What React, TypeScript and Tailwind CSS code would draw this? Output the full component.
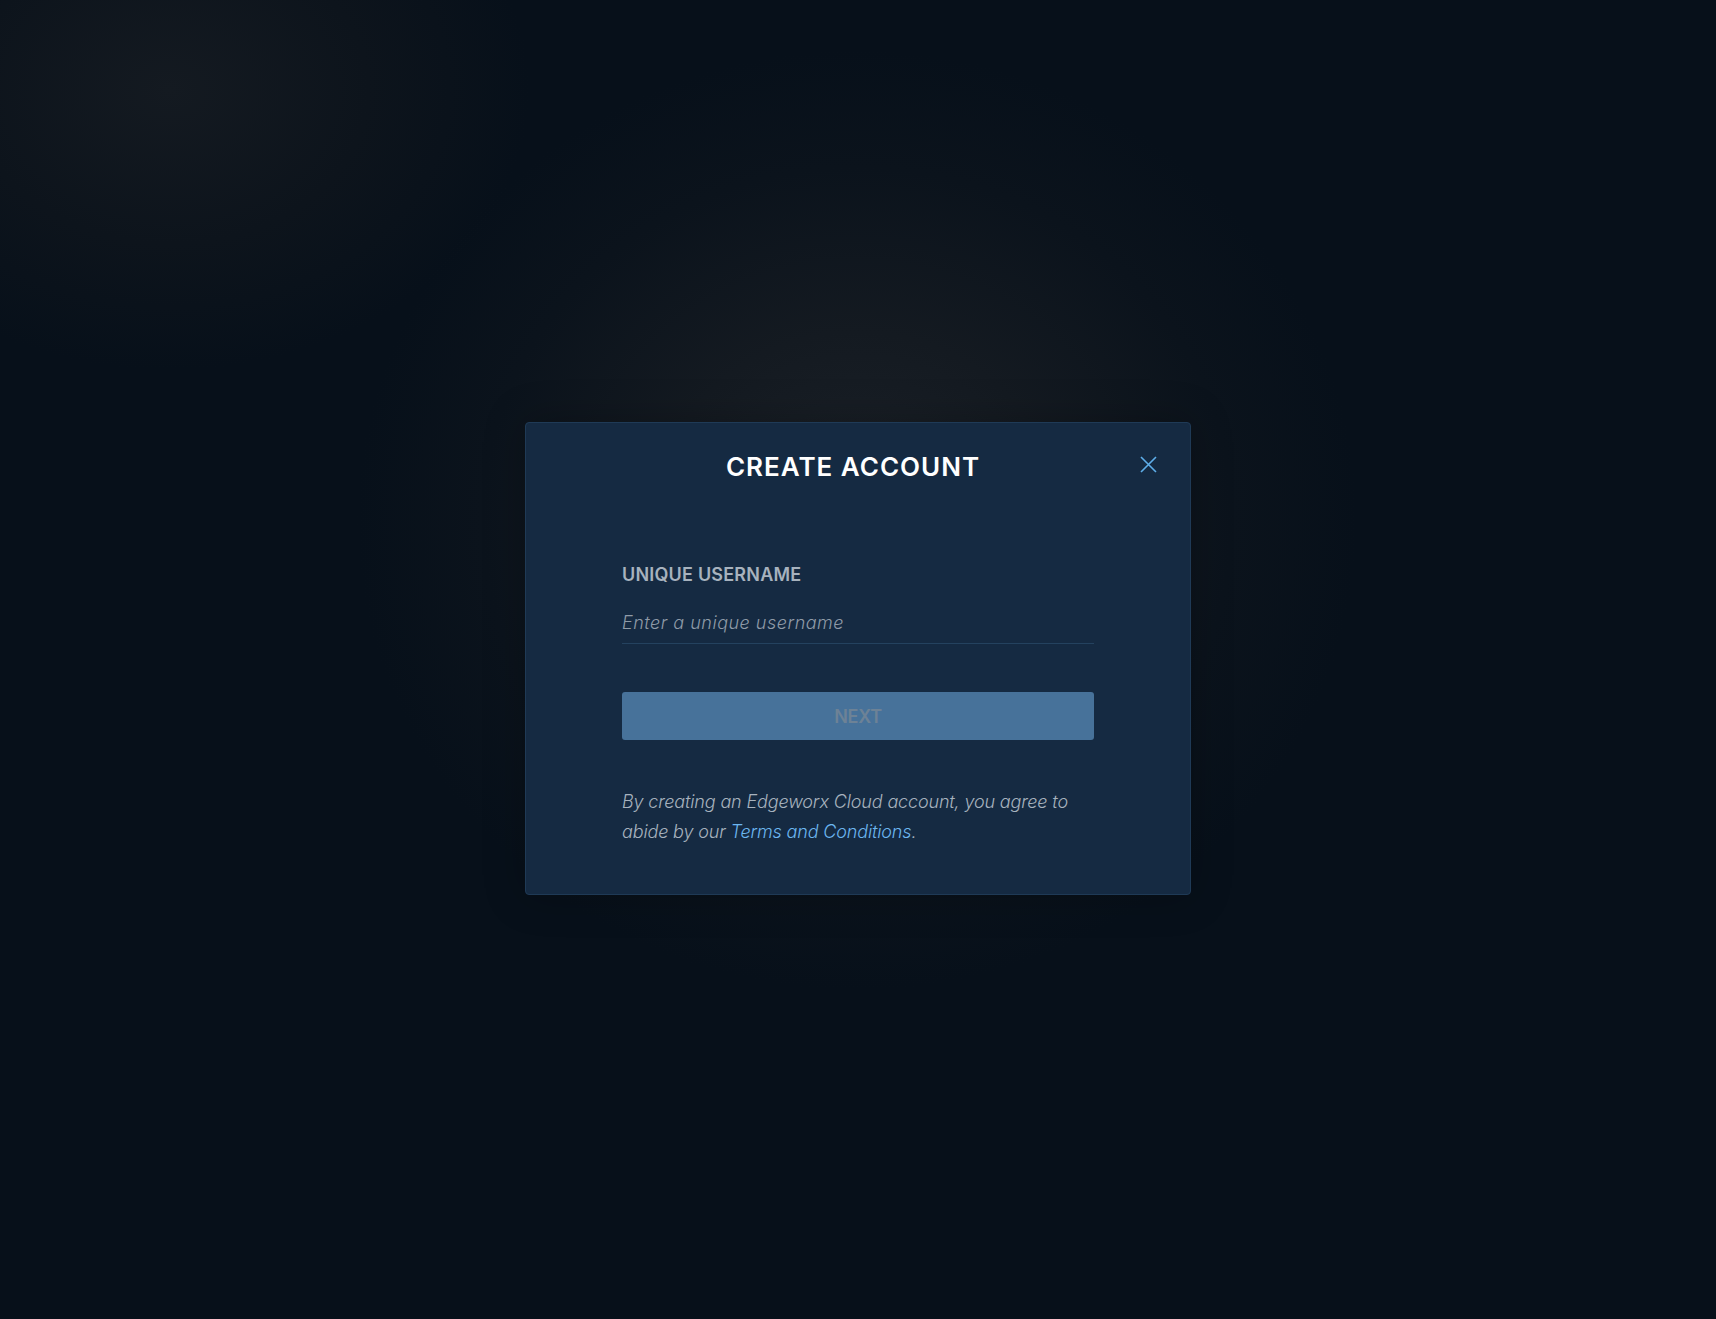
import React from "react";

export default function App() {
  return (
    <div
      className="relative w-full h-[1319px] overflow-hidden bg-[#07101a] bg-[radial-gradient(ellipse_500px_470px_at_857px_520px,#1c2229_0%,#141a21_40%,#0b131c_75%,transparent_100%),radial-gradient(ellipse_360px_280px_at_170px_90px,#141a21_0%,#0d141c_55%,transparent_100%)]"
      style={{ fontFamily: "Inter, 'Noto Sans', sans-serif" }}
    >
      <div className="flex justify-center pt-[422px]">
        <div className="relative w-[666px] rounded-[4px] border border-[#1f3a56] bg-[#152a42] pt-[28px] pb-[47px] shadow-[0_0_40px_rgba(0,0,0,0.25)]">
          <button className="absolute right-[33px] top-[33px] h-[17px] w-[17px] text-[#5eaee9]">
            <svg viewBox="0 0 17 17" width="17" height="17" fill="none" stroke="currentColor" strokeWidth="1.6">
              <path d="M1 1 L16 16 M16 1 L1 16" />
            </svg>
          </button>
          <h1 className="text-center text-[26px] leading-[32px] font-semibold text-white pr-[10px] tracking-[1px]">
            CREATE ACCOUNT
          </h1>
          <div className="px-[96px] pt-[80px]">
            <label className="block text-[18px] leading-[24px] font-semibold text-[#a7b2be] tracking-[0.2px]">
              UNIQUE USERNAME
            </label>
            <input
              type="text"
              placeholder="Enter a unique username"
              className="mt-[23px] block h-[34px] w-full border-b border-[#24425f] bg-transparent pb-[9px] text-[18px] leading-[24px] italic font-light tracking-[0.5px] text-white placeholder:text-[#8f9ba8] outline-none"
            />
            <button
              disabled
              className="mt-[48px] flex h-[48px] w-full items-center justify-center rounded-[3px] bg-[#47729a] text-[18px] font-semibold text-[#6d8296] tracking-[-0.3px]"
            >
              NEXT
            </button>
            <p className="mt-[47px] text-[18px] leading-[30px] italic font-light text-[#a7b2be] tracking-[-0.15px]">
              By creating an Edgeworx Cloud account, you agree to abide by our{" "}
              <a className="text-[#6cb6f0]">Terms and Conditions</a>.
            </p>
          </div>
        </div>
      </div>
    </div>
  );
}
